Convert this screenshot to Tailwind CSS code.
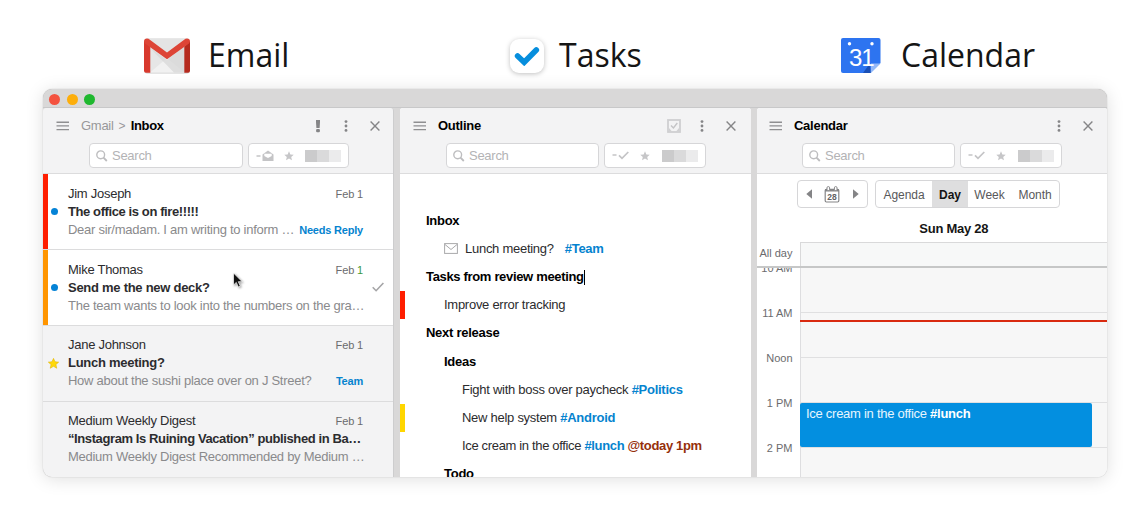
<!DOCTYPE html>
<html lang="en">
<head>
<meta charset="utf-8">
<title>Email, Tasks, Calendar</title>
<script src="https://cdn.jsdelivr.net/npm/@tailwindcss/browser@4"></script>
</head>
<body class="w-[1144px] h-[512px] overflow-hidden bg-white font-['Liberation_Sans',Arial,sans-serif] text-[13px] text-[#2c2c2e]">
<svg class="hidden">
  <symbol id="menu" viewBox="0 0 14 10"><path d="M.5 1.2h12.500M.5 4.900h12.500M.5 8.600h12.500" stroke="#8f8f91" stroke-width="1.400" fill="none"/></symbol>
  <symbol id="dots" viewBox="0 0 4 12"><g fill="#858587"><circle cx="2" cy="1.600" r="1.400"/><circle cx="2" cy="6" r="1.400"/><circle cx="2" cy="10.400" r="1.400"/></g></symbol>
  <symbol id="close" viewBox="0 0 10 10"><path d="M.6.6l8.800 8.800M9.400.6L.6 9.400" stroke="#858587" stroke-width="1.400" fill="none"/></symbol>
  <symbol id="search" viewBox="0 0 12 12"><circle cx="4.700" cy="4.800" r="3.900" fill="none" stroke="#bdbdbf" stroke-width="1.400"/><path d="M7.500 7.600l3.300 3.400" stroke="#bdbdbf" stroke-width="1.800"/></symbol>
  <symbol id="star" viewBox="0 0 12 12"><path d="M6 .4l1.650 3.700 4 .4-3 2.700.9 4L6 9.100 2.450 11.200l.9-4-3-2.700 4-.4z"/></symbol>
  <symbol id="dashcheck" viewBox="0 0 18 9"><path d="M.5 4h4" stroke="#c4c4c6" stroke-width="1.300" fill="none"/><path d="M7 4.400l3 3L16.300 1" stroke="#c4c4c6" stroke-width="1.700" fill="none"/></symbol>
</svg>

<header class="h-[89px] flex text-[32px] leading-[44px] text-[#151515] font-['Open_Sans',sans-serif]">
  <div class="flex w-[365px] pl-[144px] pt-[33px]">
    <svg class="mt-[5px] h-[36px] w-[46px]" viewBox="0 0 46 36">
      <rect x=".5" y="1" width="45" height="34.500" rx="2.500" fill="#c9c9c9"/>
      <rect x=".5" y=".3" width="45" height="34.500" rx="2.500" fill="#e6e6e6"/>
      <path d="M6 34.500L23 20 40.500 34.500z" fill="#f1f1f1"/>
      <path d="M5 9L30 34.500H40.500V8L23 22z" fill="#d6d6d6" opacity=".7"/>
      <path d="M4 .5L23 15 42 .5z" fill="#e4e4e4"/>
      <path d="M0 3v29.800q0 2 2 2H6.300V8.500z" fill="#d8392d"/>
      <path d="M46 3v29.800q0 2-2 2H40.300V8.500z" fill="#b52a1e"/>
      <path d="M0 3.500Q0 .4 3 .4L4.500.8 23 14.500 41.500.8 43 .4Q46 .4 46 3.500L45 5.500 23 21.300 1 5.500z" fill="#dd4436"/>
    </svg>
    <span class="ml-[18px]">Email</span>
  </div>
  <div class="flex w-[365px] pl-[144px] pt-[33px]">
    <div class="mt-[6px] ml-px size-[34px] rounded-[9px] bg-white shadow-[0_1px_5px_rgba(0,0,0,0.25)] flex items-center justify-center">
      <svg class="h-[20px] w-[26px]" viewBox="0 0 26 20"><path d="M3.600 10l6.600 6.300L22.300 4" stroke="#068edd" stroke-width="5.600" stroke-linejoin="miter" stroke-linecap="round" fill="none"/></svg>
    </div>
    <span class="ml-[15px]">Tasks</span>
  </div>
  <div class="flex pl-[111px] pt-[33px]">
    <svg class="mt-[5px] h-[36px] w-[40px]" viewBox="0 0 40 36">
      <path d="M2 0H37.500Q39.500 0 39.500 2V25L29.500 35H2Q0 35 0 33V2Q0 0 2 0z" fill="#2d74f0"/>
      <path d="M22 35L28.500 26 30 35z" fill="#1a4fb5"/>
      <path d="M30 25.500H39.500L29.800 35z" fill="#93b9f8"/>
      <circle cx="8.500" cy="5.700" r="1.700" fill="#fff"/><circle cx="31" cy="5.700" r="1.700" fill="#fff"/>
      <text x="20.300" y="28" text-anchor="middle" font-family="Liberation Sans" font-size="24" letter-spacing="-1" fill="#fff">31</text>
    </svg>
    <span class="ml-[20px]">Calendar</span>
  </div>
</header>

<main class="pl-[43px]">
<div class="w-[1064px] h-[388px] rounded-[9px] overflow-hidden bg-[#d9d8d8] shadow-[0_2px_18px_rgba(0,0,0,0.13),0_0_1px_rgba(0,0,0,0.35)] flex flex-col">
  <div class="h-[19px] shrink-0 border-b border-[#c8c8c9] flex items-center gap-[6.500px] pl-[6px] pt-[2px]">
    <i class="size-[11px] rounded-full bg-[#f4523f]"></i>
    <i class="size-[11px] rounded-full bg-[#fdae0b]"></i>
    <i class="size-[11px] rounded-full bg-[#1fb82f]"></i>
  </div>
  <div class="flex flex-1 min-h-0 gap-[6px] tracking-[-0.27px]">

    <section class="w-[351px] bg-[#f3f3f4] flex flex-col rounded-t-[3px] overflow-hidden border-r border-[#cdcdce]">
      <div class="h-[66px] shrink-0 border-b border-[#dcdcdd]">
        <div class="h-[35px] flex items-center pl-[13px] pr-[13.500px]">
          <svg class="w-[14px] h-[10px]"><use href="#menu"/></svg>
          <span class="ml-[11px] text-[#98989a]">Gmail</span><span class="ml-[5px] text-[12px] text-[#98989a]">&gt;</span><b class="ml-[5.500px] text-black tracking-[-0.4px]">Inbox</b>
          <svg class="ml-auto w-[6px] h-[14px]" viewBox="0 0 6 14"><path d="M1 1h4v2L4.600 9H1.400L1 3z" fill="#858587"/><rect x="1.100" y="10" width="3.800" height="3.200" rx="1" fill="#858587"/></svg>
          <svg class="ml-[23px] w-[4px] h-[12px]"><use href="#dots"/></svg>
          <svg class="ml-[22px] w-[10px] h-[10px]"><use href="#close"/></svg>
        </div>
        <div class="flex gap-[5px] pl-[46px]">
          <div class="w-[154px] h-[25px] rounded-[4px] border border-[#d6d6d8] bg-white flex items-center pl-[6px] text-[#b3b3b5]"><svg class="w-[12px] h-[12px] mr-[4px]"><use href="#search"/></svg>Search</div>
          <div class="w-[101px] h-[25px] rounded-[4px] border border-[#d6d6d8] bg-white flex items-center pl-[7px]">
            <svg class="w-[18px] h-[12px]" viewBox="0 0 18 12"><path d="M.5 6h4" stroke="#c4c4c6" stroke-width="1.300"/><path d="M6.500 4.500L12 .6l5.500 3.900V11h-11z" fill="#c4c4c6"/><path d="M8.300 3.700h7.400v2.200L12 8 8.300 5.900z" fill="#fff"/></svg>
            <svg class="ml-[10px] w-[10px] h-[10px] fill-[#c6c6c8]" viewBox="0 0 12 12"><use href="#star"/></svg>
            <div class="ml-[11px] flex h-[12px]"><i class="w-[12px] bg-[#cbcbcc]"></i><i class="w-[12px] bg-[#dadadb]"></i><i class="w-[12px] bg-[#ebebec]"></i></div>
          </div>
        </div>
      </div>

      <div class="h-[76px] shrink-0 bg-white border-b border-[#dcdcdd] flex leading-[18px]">
        <i class="w-[5px] bg-[#ff1e00]"></i>
        <div class="w-[20px] pl-[3px] pt-[34px]"><i class="block size-[7px] rounded-full bg-[#0583d6]"></i></div>
        <div class="w-[295px] pt-[11px] whitespace-nowrap">
          <div class="flex justify-between"><span>Jim Joseph</span><span class="text-[11px] tracking-[-0.15px] text-[#6b6b6d]">Feb 1</span></div>
          <b class="block tracking-[-0.4px]">The office is on fire!!!!!</b>
          <div class="flex justify-between text-[#8a8a8c]"><span>Dear sir/madam. I am writing to inform …</span><b class="text-[11px] tracking-[-0.2px] text-[#0583cf]">Needs Reply</b></div>
        </div>
      </div>
      <div class="h-[75.500px] shrink-0 bg-white border-b border-[#dcdcdd] flex leading-[18px] relative">
        <i class="w-[5px] bg-[#ff9500]"></i>
        <div class="w-[20px] pl-[3px] pt-[34px]"><i class="block size-[7px] rounded-full bg-[#0583d6]"></i></div>
        <div class="w-[295px] pt-[10.500px] whitespace-nowrap">
          <div class="flex justify-between"><span>Mike Thomas</span><span class="text-[11px] tracking-[-0.15px] text-[#6b6b6d]">Feb <span class="text-[#3f9a3a]">1</span></span></div>
          <b class="block">Send me the new deck?</b>
          <div class="text-[#8a8a8c]">The team wants to look into the numbers on the gra…</div>
        </div>
        <svg class="ml-[9px] mt-[32px] w-[12px] h-[10px]" viewBox="0 0 12 10"><path d="M.7 5.300l3.400 3.400L11.400 1" stroke="#a5a5a7" stroke-width="1.600" fill="none"/></svg>
        <svg class="absolute left-[189px] top-[22px] w-[13px] h-[18px] drop-shadow-[1px_1px_1px_rgba(0,0,0,0.4)]" viewBox="0 0 13 18"><path d="M1.500 1v12l2.800-2.600 2 4.600 2-.9-2-4.400h3.900z" fill="#111" stroke="#fff" stroke-width=".7"/></svg>
      </div>
      <div class="h-[76px] shrink-0 border-b border-[#dcdcdd] flex leading-[18px]">
        <div class="w-[25px] pl-[5px] pt-[32px]"><svg class="w-[11px] h-[11px] fill-[#ffd90a] stroke-[#e0b400] stroke-[0.6]" viewBox="0 0 12 12"><use href="#star"/></svg></div>
        <div class="w-[295px] pt-[10.500px] whitespace-nowrap">
          <div class="flex justify-between"><span>Jane Johnson</span><span class="text-[11px] tracking-[-0.15px] text-[#6b6b6d]">Feb 1</span></div>
          <b class="block">Lunch meeting?</b>
          <div class="flex justify-between text-[#8a8a8c]"><span>How about the sushi place over on J Street?</span><b class="text-[11px] tracking-[-0.2px] text-[#0583cf]">Team</b></div>
        </div>
      </div>
      <div class="flex-1 flex leading-[18px] pl-[25px]">
        <div class="w-[295px] pt-[10px] whitespace-nowrap">
          <div class="flex justify-between"><span>Medium Weekly Digest</span><span class="text-[11px] tracking-[-0.15px] text-[#6b6b6d]">Feb 1</span></div>
          <b class="block tracking-[-0.4px]">“Instagram Is Ruining Vacation” published in Ba…</b>
          <div class="text-[#8a8a8c]">Medium Weekly Digest Recommended by Medium …</div>
        </div>
      </div>
    </section>

    <section class="w-[350.500px] bg-white flex flex-col rounded-t-[3px] overflow-hidden">
      <div class="h-[66px] shrink-0 bg-[#f3f3f4] border-b border-[#dcdcdd]">
        <div class="h-[35px] flex items-center pl-[13px] pr-[14.500px]">
          <svg class="w-[14px] h-[10px]"><use href="#menu"/></svg>
          <b class="ml-[11px] text-black">Outline</b>
          <svg class="ml-auto w-[14px] h-[14px]" viewBox="0 0 14 14"><rect x="1" y="1" width="12" height="12" fill="none" stroke="#cfcfd1" stroke-width="1.800"/><path d="M4 6.500l2.400 2.400L10.300 4" stroke="#c4c4c6" stroke-width="1.400" fill="none"/><path d="M2 9l3 3.500H2zM12 9l-3 3.500h3z" fill="#d0d0d2"/></svg>
          <svg class="ml-[19px] w-[4px] h-[12px]"><use href="#dots"/></svg>
          <svg class="ml-[22px] w-[10px] h-[10px]"><use href="#close"/></svg>
        </div>
        <div class="flex gap-[5px] pl-[46px]">
          <div class="w-[153px] h-[25px] rounded-[4px] border border-[#d6d6d8] bg-white flex items-center pl-[6px] text-[#b3b3b5]"><svg class="w-[12px] h-[12px] mr-[4px]"><use href="#search"/></svg>Search</div>
          <div class="w-[102px] h-[25px] rounded-[4px] border border-[#d6d6d8] bg-white flex items-center pl-[7px]">
            <svg class="w-[18px] h-[9px]"><use href="#dashcheck"/></svg>
            <svg class="ml-[10px] w-[10px] h-[10px] fill-[#c6c6c8]" viewBox="0 0 12 12"><use href="#star"/></svg>
            <div class="ml-[12px] flex h-[12px]"><i class="w-[12px] bg-[#cbcbcc]"></i><i class="w-[12px] bg-[#dadadb]"></i><i class="w-[12px] bg-[#ebebec]"></i></div>
          </div>
        </div>
      </div>
      <div class="pt-[32.600px] flex flex-col leading-[28.200px] whitespace-nowrap">
        <b class="pl-[26px] h-[28.200px] text-black">Inbox</b>
        <div class="pl-[44px] h-[28.200px] flex items-center"><svg class="w-[14px] h-[11px] mr-[7px]" viewBox="0 0 14 11"><rect x=".6" y=".6" width="12.800" height="9.800" fill="none" stroke="#a9a9ab"/><path d="M1 1.500l6 5 6-5" fill="none" stroke="#a9a9ab"/></svg><span>Lunch meeting?</span><b class="ml-[11px] text-[#0583cf]">#Team</b></div>
        <div class="pl-[26px] h-[28.200px] flex items-center text-black"><b class="tracking-[-0.33px]">Tasks from review meeting</b><i class="w-px h-[15px] bg-black"></i></div>
        <div class="h-[28.200px] border-l-[5px] border-[#ff1e00] pl-[39px]">Improve error tracking</div>
        <b class="pl-[26px] h-[28.200px] text-black">Next release</b>
        <b class="pl-[44px] h-[28.200px] text-black">Ideas</b>
        <div class="pl-[62px] h-[28.200px]">Fight with boss over paycheck <b class="text-[#0583cf]">#Politics</b></div>
        <div class="h-[28.200px] border-l-[5px] border-[#ffd600] pl-[57px]">New help system <b class="text-[#0583cf]">#Android</b></div>
        <div class="pl-[62px] h-[28.200px] tracking-[-0.34px]">Ice cream in the office <b class="text-[#0583cf]">#lunch</b> <b class="text-[#96300b]">@today 1pm</b></div>
        <b class="pl-[44px] h-[28.200px] text-black">Todo</b>
      </div>
    </section>

    <section class="w-[350.500px] bg-white flex flex-col rounded-t-[3px] overflow-hidden">
      <div class="h-[66px] shrink-0 bg-[#f3f3f4] border-b border-[#dcdcdd]">
        <div class="h-[35px] flex items-center pl-[12.500px] pr-[14px]">
          <svg class="w-[14px] h-[10px]"><use href="#menu"/></svg>
          <b class="ml-[11px] text-black">Calendar</b>
          <svg class="ml-auto w-[4px] h-[12px]"><use href="#dots"/></svg>
          <svg class="ml-[22px] w-[10px] h-[10px]"><use href="#close"/></svg>
        </div>
        <div class="flex gap-[5px] pl-[45.500px]">
          <div class="w-[153px] h-[25px] rounded-[4px] border border-[#d6d6d8] bg-white flex items-center pl-[6px] text-[#b3b3b5]"><svg class="w-[12px] h-[12px] mr-[4px]"><use href="#search"/></svg>Search</div>
          <div class="w-[102px] h-[25px] rounded-[4px] border border-[#d6d6d8] bg-white flex items-center pl-[7px]">
            <svg class="w-[18px] h-[9px]"><use href="#dashcheck"/></svg>
            <svg class="ml-[10px] w-[10px] h-[10px] fill-[#c6c6c8]" viewBox="0 0 12 12"><use href="#star"/></svg>
            <div class="ml-[12px] flex h-[12px]"><i class="w-[12px] bg-[#cbcbcc]"></i><i class="w-[12px] bg-[#dadadb]"></i><i class="w-[12px] bg-[#ebebec]"></i></div>
          </div>
        </div>
      </div>
      <div class="h-[68px] shrink-0 pt-[6px]">
        <div class="flex gap-[7px] pl-[40.500px] h-[28px] text-[12px] tracking-[-0.05px] text-[#58585a]">
          <div class="w-[71px] rounded-[4px] border border-[#d6d6d8] flex items-center">
            <svg class="ml-[8px] w-[6px] h-[10px]" viewBox="0 0 6 10"><path d="M6 .3v9.400L.3 5z" fill="#848486"/></svg>
            <svg class="ml-[12px] w-[16px] h-[17px]" viewBox="0 0 16 17"><rect x="1.200" y="3.300" width="13.600" height="12.700" rx="1.200" fill="none" stroke="#858587" stroke-width="1.200"/><path d="M1 3h14v2.600H1z" fill="#858587"/><rect x="3" y=".6" width="2.600" height="4" rx="1.200" fill="#fff" stroke="#858587"/><rect x="10.400" y=".6" width="2.600" height="4" rx="1.200" fill="#fff" stroke="#858587"/><text x="8" y="14" text-anchor="middle" font-size="8.500" font-weight="bold" font-family="Liberation Sans" fill="#626264">28</text></svg>
            <svg class="ml-[13px] w-[6px] h-[10px]" viewBox="0 0 6 10"><path d="M0 .3v9.400L5.700 5z" fill="#848486"/></svg>
          </div>
          <div class="w-[185px] rounded-[4px] border border-[#d6d6d8] flex items-stretch leading-[28px] text-center overflow-hidden">
            <span class="w-[56px]">Agenda</span><b class="w-[36px] bg-[#dededf] text-[#141414]">Day</b><span class="w-[43px]">Week</span><span class="w-[48px]">Month</span>
          </div>
        </div>
        <b class="block pl-[44px] text-center leading-[18px] mt-[12px] text-[#161616]">Sun May 28</b>
      </div>
      <div class="h-[24px] shrink-0 flex text-[11px] tracking-normal text-[#6b6b6d]">
        <span class="w-[43px] pr-[7px] text-right leading-[23px] whitespace-nowrap">All day</span>
        <div class="flex-1 border-t border-l border-[#d9d9da] bg-[#f7f8f8]"></div>
      </div>
      <div class="relative flex-1 min-h-0 overflow-hidden flex border-t-2 border-[#c6c7c7]">
        <div class="w-[43px] pr-[7px] -mt-[7.500px] text-right text-[11px] tracking-normal leading-[14px] text-[#6b6b6d] *:h-[45px] whitespace-nowrap">
          <div>10 AM</div><div>11 AM</div><div>Noon</div><div>1 PM</div><div>2 PM</div>
        </div>
        <div class="flex-1 border-l border-[#dedee0] bg-[#f7f7f7] flex flex-col *:h-[45px] *:shrink-0 *:border-b *:border-[#e0e0e1]">
          <div></div><div></div><div></div><div></div>
        </div>
        <div class="absolute left-[43.500px] right-0 top-[52px] h-[2px] bg-[#d92a10]"></div>
        <div class="absolute left-[43.500px] top-[135px] w-[292px] h-[44px] rounded-[2px] bg-[#038fe0] text-[#e6f5fe] leading-[14px] pl-[6px] pt-[4px]">Ice cream in the office <b class="text-white">#lunch</b></div>
      </div>
    </section>
  </div>
</div>
</main>
</body>
</html>
